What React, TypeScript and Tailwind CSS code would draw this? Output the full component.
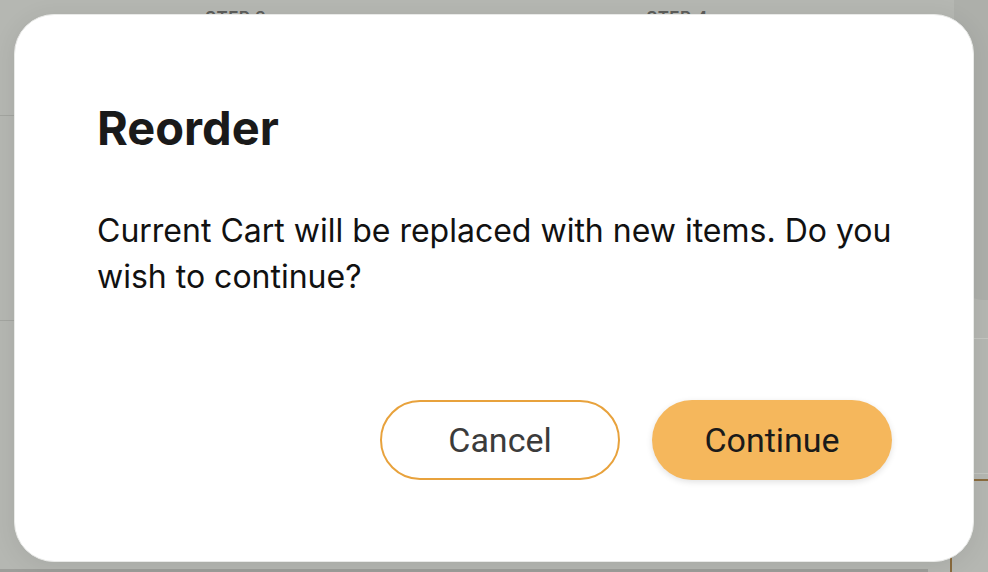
import React from 'react';

const Background: React.FC = () => (
  <div className="absolute inset-0 bg-[#b5b7b2]">
    <div className="flex h-[40px] px-[205px] gap-[380px] pt-[6px] text-[17px] leading-[24px] font-semibold tracking-wide text-[#5d5e5b]">
      <span>STEP 3</span>
      <span>STEP 4</span>
    </div>
    <div className="absolute left-0 top-[115px] h-px w-[14px] bg-[#a3a5a0]" />
    <div className="absolute left-0 top-[320px] h-px w-[14px] bg-[#a3a5a0]" />
    <div className="absolute right-0 top-0 h-[300px] w-[34px] rounded-bl-[30px] bg-[#adafaa]" />
    <div className="absolute right-0 top-[338px] h-px w-[30px] bg-[#c4c6c1]" />
    <div className="absolute right-0 top-[473px] h-px w-[30px] bg-[#c4c6c1]" />
    <div className="absolute right-0 top-[479px] h-[100px] w-[38px] rounded-tl-[10px] border-l-[2px] border-t-[2px] border-[#8a6b3e]" />
    <div className="absolute bottom-0 left-0 h-[3px] w-[928px] bg-[#9d9e9a]" />
  </div>
);

export default function App() {
  return (
    <div
      className="relative h-[572px] w-[988px] overflow-hidden"
      style={{ fontFamily: 'Inter, "Noto Sans", sans-serif' }}
    >
      <Background />
      <div className="absolute left-[14px] top-[14px] flex h-[548px] w-[960px] flex-col rounded-[40px] border border-[#e9eae8] bg-white pl-[82px] pr-[81px] pt-[89px] pb-[81px] shadow-[0_4px_24px_rgba(0,0,0,0.08)]">
        <h1 className="text-[47px] font-bold leading-[48px] text-[#1a1a1a]">Reorder</h1>
        <p className="mt-[56px] text-[32px] leading-[46px] text-[#111]">
          Current Cart will be replaced with new items. Do you wish to continue?
        </p>
        <div
          className="mt-auto flex justify-end gap-[32px]"
          style={{ fontFamily: 'Roboto, "Liberation Sans", sans-serif' }}
        >
          <button className="h-[80px] w-[240px] rounded-full border-2 border-[#e8a23c] bg-white text-[34px] text-[#3b3b3b]">
            Cancel
          </button>
          <button className="h-[80px] w-[240px] rounded-full bg-[#f5b75c] text-[34px] text-[#1a1a1a] shadow-[0_2px_6px_rgba(0,0,0,0.12)]">
            Continue
          </button>
        </div>
      </div>
    </div>
  );
}
